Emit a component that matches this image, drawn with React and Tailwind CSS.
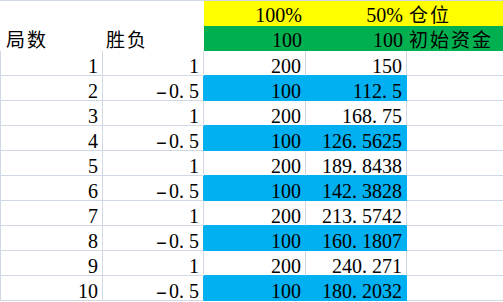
const rows = [
  [1, "1", 200, "150"],
  [2, "-0.5", 100, "112.5"],
  [3, "1", 200, "168.75"],
  [4, "-0.5", 100, "126.5625"],
  [5, "1", 200, "189.8438"],
  [6, "-0.5", 100, "142.3828"],
  [7, "1", 200, "213.5742"],
  [8, "-0.5", 100, "160.1807"],
  [9, "1", 200, "240.271"],
  [10, "-0.5", 100, "180.2032"],
];

const num = "h-[25px] border-b pt-[3px] pr-[4px] text-right leading-[24px]";
const head = "h-[25px] pt-[2px] pr-[4px] text-right leading-[24px]";
const cjk = "[font-family:'Noto_Sans_CJK_SC',sans-serif] text-[19px] tracking-[2px] leading-[19px]";

// SimSun-style wide period and minus
function Num({ v }) {
  let s = String(v);
  let neg = null;
  if (s.startsWith("-")) {
    neg = <span className="inline-block scale-x-[1.7] mr-[4px]">-</span>;
    s = s.slice(1);
  }
  const i = s.indexOf(".");
  if (i < 0) return <>{neg}{s}</>;
  return (
    <>
      {neg}
      {s.slice(0, i)}
      <span className="mr-[5px]">.</span>
      {s.slice(i + 1)}
    </>
  );
}

export default function App() {
  return (
    <div className="w-[503px] h-[302px] overflow-hidden bg-white text-black [font-family:'Liberation_Serif','Noto_Sans_CJK_SC',serif] text-[20px]">
      <div className="h-px bg-[#d0d7e5]" />
      <div className="grid grid-cols-[103px_101px_102px_101px_1fr]">
        {/* merged header cells */}
        <div className="row-span-2 flex items-end pl-[6px] pb-[3px]">
          <span className={cjk}>局数</span>
        </div>
        <div className="row-span-2 flex items-end pl-[3px] pb-[3px]">
          <span className={cjk}>胜负</span>
        </div>
        <div className={`${head} bg-[#ffff00]`}>100%</div>
        <div className={`${head} bg-[#ffff00]`}>50%</div>
        <div className="h-[25px] bg-[#ffff00] pl-[2px] pb-[3px] flex items-end">
          <span className={cjk}>仓位</span>
        </div>
        <div className={`${head} bg-[#00b050]`}>100</div>
        <div className={`${head} bg-[#00b050]`}>100</div>
        <div className="h-[25px] bg-[#00b050] pl-[2px] pb-[3px] flex items-end whitespace-nowrap">
          <span className={cjk}>初始资金</span>
        </div>

        {rows.map(([n, wl, a, b]) => {
          const blue = n % 2 === 0;
          return (
            <div key={n} className="contents">
              <div className={`${num} border-l border-r border-[#d0d7e5]`}>{n}</div>
              <div className={`${num} border-r border-b-[#d0d7e5] ${blue ? "border-r-[#00b0f0]" : "border-r-[#d0d7e5]"}`}>
                <Num v={wl} />
              </div>
              <div className={`${num} border-r ${blue ? "bg-[#00b0f0] border-[#00b0f0]" : "border-r-[#d0d7e5] border-b-[#00b0f0]"}`}>{a}</div>
              <div className={`${num} border-r ${blue ? "bg-[#00b0f0] border-[#00b0f0]" : "border-r-[#d0d7e5] border-b-[#00b0f0]"}`}>
                <Num v={b} />
              </div>
              <div className="h-[25px] border-b border-[#d0d7e5]" />
            </div>
          );
        })}
      </div>
    </div>
  );
}
